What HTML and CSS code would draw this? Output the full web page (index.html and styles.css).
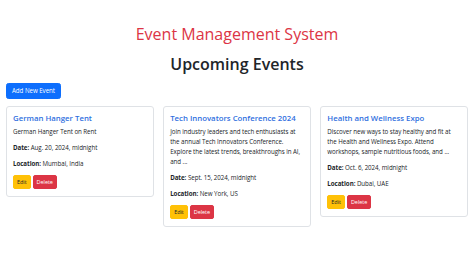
FILE: index.html
```html
<!DOCTYPE html>
<html lang="en">
<head>
<meta charset="utf-8">
<title>Event Management System</title>
<link rel="stylesheet" href="styles.css">
</head>
<body>
<div class="page">
  <h1 class="site-title">Event Management System</h1>
  <h2 class="section-title">Upcoming Events</h2>
  <div class="toolbar"><a class="btn btn-primary" href="#">Add New Event</a></div>
  <div class="cards">
    <div class="card">
      <h5 class="card-title">German Hanger Tent</h5>
      <p class="card-text">German Hanger Tent on Rent</p>
      <p class="card-text"><strong>Date:</strong> Aug. 20, 2024, midnight</p>
      <p class="card-text"><strong>Location:</strong> Mumbai, India</p>
      <div class="actions"><a class="btn btn-sm btn-warning" href="#">Edit</a><a class="btn btn-sm btn-danger" href="#">Delete</a></div>
    </div>
    <div class="card">
      <h5 class="card-title">Tech Innovators Conference 2024</h5>
      <p class="card-text">Join industry leaders and tech enthusiasts at the annual Tech Innovators Conference. Explore the latest trends, breakthroughs in AI, and ...</p>
      <p class="card-text"><strong>Date:</strong> Sept. 15, 2024, midnight</p>
      <p class="card-text"><strong>Location:</strong> New York, US</p>
      <div class="actions"><a class="btn btn-sm btn-warning" href="#">Edit</a><a class="btn btn-sm btn-danger" href="#">Delete</a></div>
    </div>
    <div class="card">
      <h5 class="card-title">Health and Wellness Expo</h5>
      <p class="card-text">Discover new ways to stay healthy and fit at the Health and Wellness Expo. Attend workshops, sample nutritious foods, and ...</p>
      <p class="card-text"><strong>Date:</strong> Oct. 6, 2024, midnight</p>
      <p class="card-text"><strong>Location:</strong> Dubai, UAE</p>
      <div class="actions"><a class="btn btn-sm btn-warning" href="#">Edit</a><a class="btn btn-sm btn-danger" href="#">Delete</a></div>
    </div>
  </div>
</div>
</body>
</html>
```
FILE: styles.css
```css
* { box-sizing: border-box; }
html, body { margin: 0; padding: 0; background: #fff; }
body {
  font-family: "Open Sans", "Noto Sans", sans-serif;
  font-size: 6.2px;
  line-height: 10px;
  letter-spacing: -0.05px;
  color: #212529;
}
.page { padding: 24px 6px 0 6px; }
.site-title {
  margin: 0;
  text-align: center;
  font-size: 16px;
  line-height: 20px;
  font-weight: 400;
  letter-spacing: 0;
  color: #dc3545;
}
.section-title {
  margin: 10px 0 0 0;
  text-align: center;
  font-size: 16px;
  line-height: 20px;
  font-weight: 600;
  letter-spacing: 0;
  color: #212529;
}
.toolbar { margin-top: 9px; display: flex; }
.btn {
  display: inline-block;
  text-decoration: none;
  border: 1px solid transparent;
  border-radius: 2.5px;
  font-size: 6.2px;
  line-height: 10px;
  padding: 2px 5px;
  font-weight: 400;
}
.btn-primary { background: #0d6efd; color: #fff; border-color: #0d6efd; }
.cards {
  margin-top: 7px;
  display: grid;
  grid-template-columns: repeat(3, 1fr);
  column-gap: 9.5px;
  align-items: start;
}
.card {
  border: 1px solid #dfe2e6;
  border-radius: 3px;
  padding: 6px 6px 7px 6px;
  background: #fff;
}
.card-title {
  margin: 0 0 3px 0;
  font-size: 7.8px;
  line-height: 11px;
  font-weight: 600;
  letter-spacing: 0;
  color: #2f6fe0;
}
.card-text { margin: 0 0 6px 0; }
.card-text strong { font-weight: 700; }
.actions { display: flex; gap: 2px; }
.btn-sm {
  font-size: 5.5px;
  line-height: 9px;
  padding: 1.5px 3px;
  border-radius: 2px;
}
.btn-warning { background: #ffc107; border-color: #ffc107; color: #212529; }
.btn-danger { background: #dc3545; border-color: #dc3545; color: #fff; }
```
